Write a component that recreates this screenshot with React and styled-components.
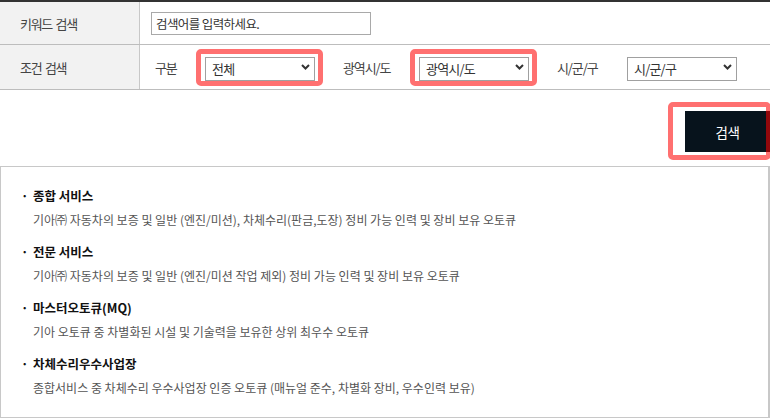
import React from 'react'
import styled, { createGlobalStyle } from 'styled-components'

const GlobalStyle = createGlobalStyle`
  html, body {
    margin: 0;
    padding: 0;
    background: #fff;
    font-family: "Noto Sans CJK KR", "Noto Sans", sans-serif;
  }
`

const Page = styled.div`
  width: 770px;
  overflow: hidden;
`

const Table = styled.div`
  border-top: 2px solid #333;
`

const Row = styled.div`
  display: flex;
  height: ${p => p.$h}px;
  border-bottom: 1px solid #bdbdbd;
`

const Th = styled.div`
  width: 140px;
  flex-shrink: 0;
  display: flex;
  align-items: center;
  padding-left: 20px;
  box-sizing: border-box;
  background: #f2f2f2;
  border-right: 1px solid #c8c8c8;
  color: #444;
  font-size: 13px;
  letter-spacing: -1.3px;
  word-spacing: 2px;
`

const Td = styled.div`
  flex: 1;
  display: flex;
  align-items: center;
  padding-left: ${p => p.$pl}px;
  gap: 28px;
`

const Input = styled.input`
  width: 220px;
  height: 23px;
  box-sizing: border-box;
  border: 1px solid #a9a9a9;
  padding: 0 4px;
  font-family: inherit;
  font-size: 12.5px;
  letter-spacing: -0.6px;
  color: #333;
  outline: none;
  &::placeholder {
    color: #333;
  }
`

const Group = styled.div`
  display: flex;
  align-items: center;
`

const FieldLabel = styled.span`
  width: ${p => p.$w}px;
  font-size: 13px;
  letter-spacing: -1.1px;
  color: #444;
  white-space: nowrap;
`

const SelectBox = styled.div`
  position: relative;
  width: 110px;
  height: 24px;
`

const Select = styled.select`
  appearance: none;
  width: 100%;
  height: 100%;
  box-sizing: border-box;
  border: 1px solid #a0a0a0;
  border-radius: 0;
  background: #fff;
  padding: 0 0 0 6px;
  font-family: inherit;
  font-size: 13px;
  letter-spacing: -0.8px;
  color: #333;
  outline: none;
`

const Chevron = styled.svg`
  position: absolute;
  right: 5px;
  top: 9px;
  width: 9px;
  height: 6px;
  pointer-events: none;
`

const Highlight = styled.div`
  position: absolute;
  top: ${p => p.$t}px;
  left: ${p => p.$l}px;
  right: ${p => p.$r}px;
  bottom: ${p => p.$b}px;
  border: 5px solid rgba(255, 0, 0, 0.56);
  border-radius: 5px;
  pointer-events: none;
`

const ButtonBar = styled.div`
  display: flex;
  justify-content: flex-end;
  padding: 21px 0 14px;
`

const ButtonWrap = styled.div`
  position: relative;
`

const SearchButton = styled.button`
  width: 85px;
  height: 41px;
  border: 0;
  background: #07131c;
  color: #fff;
  font-family: inherit;
  font-size: 13.5px;
  letter-spacing: -0.5px;
  cursor: pointer;
`

const InfoBox = styled.ul`
  list-style: none;
  margin: 0;
  padding: 18px 0 13px;
  height: 252px;
  box-sizing: border-box;
  border: 1px solid #c8c8c8;
  border-right-width: 2px;
`

const Item = styled.li`
  padding: 0 0 11px 20px;
`

const Title = styled.div`
  display: flex;
  height: 20px;
  align-items: center;
  font-size: 12.5px;
  font-weight: 700;
  color: #111;
  &::before {
    content: '·';
    width: 12px;
    font-weight: 700;
  }
`

const Desc = styled.p`
  margin: 5px 0 0 12px;
  height: 20px;
  line-height: 20px;
  font-size: 12px;
  color: #555;
`

const ChevronIcon = () => (
  <Chevron viewBox="0 0 9 6">
    <path d="M1 1 L4.5 4.5 L8 1" fill="none" stroke="#333" strokeWidth="2" />
  </Chevron>
)

const Dropdown = ({ value, marked }) => (
  <SelectBox>
    <Select defaultValue={value}>
      <option>{value}</option>
    </Select>
    <ChevronIcon />
    {marked && <Highlight $t={-6} $l={-9} $r={-8} $b={-7} />}
  </SelectBox>
)

const services = [
  ['종합 서비스', '기아㈜ 자동차의 보증 및 일반 (엔진/미션), 차체수리(판금,도장) 정비 가능 인력 및 장비 보유 오토큐'],
  ['전문 서비스', '기아㈜ 자동차의 보증 및 일반 (엔진/미션 작업 제외) 정비 가능 인력 및 장비 보유 오토큐'],
  ['마스터오토큐(MQ)', '기아 오토큐 중 차별화된 시설 및 기술력을 보유한 상위 최우수 오토큐'],
  ['차체수리우수사업장', '종합서비스 중 차체수리 우수사업장 인증 오토큐 (매뉴얼 준수, 차별화 장비, 우수인력 보유)'],
]

export default function App() {
  return (
    <Page>
      <GlobalStyle />
      <Table>
        <Row $h={42}>
          <Th>키워드 검색</Th>
          <Td $pl={11}>
            <Input placeholder="검색어를 입력하세요." />
          </Td>
        </Row>
        <Row $h={44}>
          <Th>조건 검색</Th>
          <Td $pl={15}>
            <Group>
              <FieldLabel $w={50}>구분</FieldLabel>
              <Dropdown value="전체" marked />
            </Group>
            <Group>
              <FieldLabel $w={76}>광역시/도</FieldLabel>
              <Dropdown value="광역시/도" marked />
            </Group>
            <Group>
              <FieldLabel $w={70}>시/군/구</FieldLabel>
              <Dropdown value="시/군/구" />
            </Group>
          </Td>
        </Row>
      </Table>
      <ButtonBar>
        <ButtonWrap>
          <SearchButton>검색</SearchButton>
          <Highlight $t={-9} $l={-17} $r={-1} $b={-8} />
        </ButtonWrap>
      </ButtonBar>
      <InfoBox>
        {services.map(([t, d]) => (
          <Item key={t}>
            <Title>{t}</Title>
            <Desc>{d}</Desc>
          </Item>
        ))}
      </InfoBox>
    </Page>
  )
}
